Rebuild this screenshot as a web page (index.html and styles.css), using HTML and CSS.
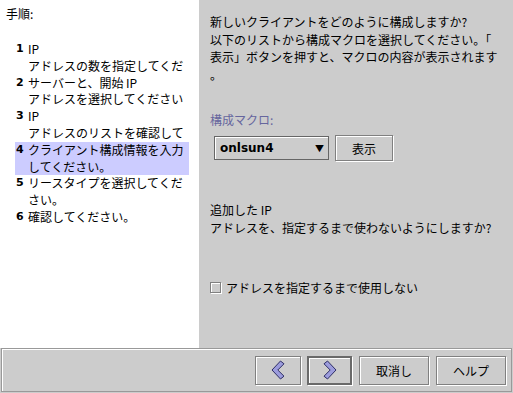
FILE: index.html
```html
<!DOCTYPE html>
<html lang="ja">
<head>
  <meta charset="UTF-8" />
  <title>クライアント構成</title>
  <link rel="stylesheet" href="styles.css">
</head>
<body>
  <div class="wizard">
    <div class="main">
      <div class="steps">
        <div class="steps-title">手順:</div>
        <ol class="step-list">
          <li class="step"><span class="num">1</span><span class="text"><span>IP</span><span>アドレスの数を指定してくだ</span></span></li>
          <li class="step"><span class="num">2</span><span class="text"><span>サーバーと、開始 IP</span><span>アドレスを選択してください</span></span></li>
          <li class="step"><span class="num">3</span><span class="text"><span>IP</span><span>アドレスのリストを確認して</span></span></li>
          <li class="step current"><span class="num">4</span><span class="text"><span>クライアント構成情報を入力</span><span>してください。</span></span></li>
          <li class="step"><span class="num">5</span><span class="text"><span>リースタイプを選択してくだ</span><span>さい。</span></span></li>
          <li class="step"><span class="num">6</span><span class="text"><span>確認してください。</span></span></li>
        </ol>
      </div>

      <div class="content">
        <p class="intro">新しいクライアントをどのように構成しますか?<br>以下のリストから構成マクロを選択してください。「<br>表示」ボタンを押すと、マクロの内容が表示されます<br>。</p>

        <div class="field-label">構成マクロ:</div>
        <div class="macro-row">
          <div class="combo">
            <span class="combo-value">onlsun4</span>
            <span class="combo-arrow">&#9660;</span>
          </div>
          <button class="btn show-btn">表示</button>
        </div>

        <p class="question">追加した IP<br>アドレスを、指定するまで使わないようにしますか?</p>

        <label class="check-row">
          <span class="checkbox"></span>
          <span>アドレスを指定するまで使用しない</span>
        </label>
      </div>
    </div>

    <div class="footer">
      <button class="btn nav-btn" aria-label="戻る">
        <svg width="14" height="20" viewBox="0 0 14 20"><polygon points="9.5,1 13,3.8 6.8,10 13,16.2 9.5,19 1,10" fill="#9c9cdc" stroke="#2e2e66" stroke-width="1" stroke-linejoin="round"/></svg>
      </button>
      <button class="btn nav-btn focused" aria-label="次へ">
        <svg width="14" height="20" viewBox="0 0 14 20"><polygon points="4.5,1 1,3.8 7.2,10 1,16.2 4.5,19 13,10" fill="#9c9cdc" stroke="#2e2e66" stroke-width="1" stroke-linejoin="round"/></svg>
      </button>
      <button class="btn text-btn">取消し</button>
      <button class="btn text-btn">ヘルプ</button>
    </div>
  </div>
</body>
</html>
```

FILE: styles.css
```css
:root {
  --panel: #cccccc;
  --edge: #808080;
  --label: #66669e;
  --pick: #ccccff;
}

* {
  box-sizing: border-box;
}

body {
  margin: 0;
  width: 513px;
  height: 393px;
  overflow: hidden;
  background: var(--panel);
  font-family: "Noto Sans CJK JP", "DejaVu Sans", sans-serif;
  font-size: 12px;
  color: #000;
}

.wizard {
  display: flex;
  flex-direction: column;
  height: 393px;
}

.main {
  display: flex;
  height: 348px;
}

/* left column with the steps */
.steps {
  width: 199px;
  background: #fff;
  padding-top: 5px;
}

.steps-title {
  padding-left: 6px;
  line-height: 17px;
}

.step-list {
  list-style: none;
  margin: 19px 0 0 15px;
  padding: 0;
  width: 174px;
}

.step {
  display: flex;
  line-height: 16.8px;
  overflow: hidden;
}

.step.current {
  background: var(--pick);
}

.num {
  flex: none;
  width: 13px;
  padding-left: 1px;
  font-family: "DejaVu Sans", sans-serif;
  font-weight: bold;
  font-size: 11px;
}

.text {
  display: flex;
  flex-direction: column;
  min-width: 0;
}

.text span {
  white-space: nowrap;
}

/* right column */
.content {
  flex: 1;
  padding: 13px 0 0 11px;
}

.intro {
  margin: 0;
  line-height: 17.5px;
}

.field-label {
  margin-top: 28px;
  line-height: 17px;
  color: var(--label);
}

.macro-row {
  display: flex;
  align-items: center;
  gap: 6px;
  margin: 7px 0 0 4px;
}

.combo {
  display: flex;
  align-items: center;
  justify-content: space-between;
  width: 115px;
  height: 24px;
  padding: 0 4px 0 5px;
  border: 1px solid #666;
  box-shadow: inset 1px 1px 0 #fff;
}

.combo-value {
  font-family: "DejaVu Sans", sans-serif;
  font-weight: bold;
  font-size: 12px;
}

.combo-arrow {
  font-size: 9px;
}

.btn {
  margin: 0;
  padding: 0;
  background: var(--panel);
  border: 1px solid var(--edge);
  box-shadow: inset 1px 1px 0 #fff, 1px 1px 0 #fff;
  font-family: inherit;
  font-size: 12px;
  color: #000;
}

.show-btn {
  width: 58px;
  height: 26px;
}

.question {
  margin: 40px 0 0;
  line-height: 18px;
}

.check-row {
  display: flex;
  align-items: center;
  gap: 5px;
  margin-top: 42px;
  line-height: 17px;
}

.checkbox {
  width: 11px;
  height: 11px;
  border: 1px solid var(--edge);
  box-shadow: inset 1px 1px 0 #fff, 1px 1px 0 #fff;
}

/* bottom button bar */
.footer {
  display: flex;
  align-items: center;
  justify-content: flex-end;
  gap: 7px;
  height: 44px;
  margin: 0 1px 1px;
  padding-right: 5px;
  border: 1px solid #999;
  box-shadow: inset 1px 1px 0 #fff;
}

.nav-btn {
  display: flex;
  align-items: center;
  justify-content: center;
  width: 46px;
  height: 29px;
}

.nav-btn + .nav-btn {
  margin-left: -1px;
}

.nav-btn.focused {
  width: 45px;
  border: 2px solid #6a6a6a;
}

.text-btn {
  width: 70px;
  height: 29px;
}
```
